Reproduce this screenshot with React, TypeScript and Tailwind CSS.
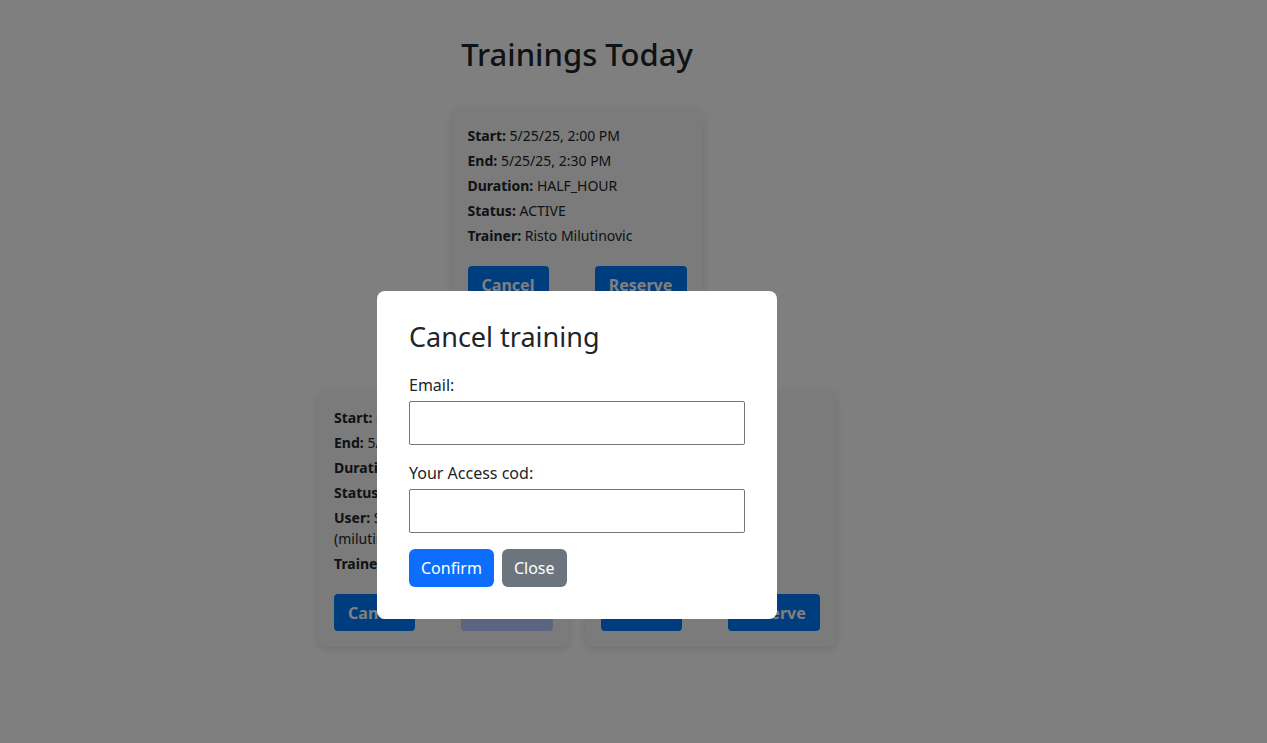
import React from "react";

const font = { fontFamily: '"Noto Sans", "Open Sans", sans-serif' };

function Line({ label, value }: { label: string; value: string }) {
  return (
    <p className="text-[14px] leading-[21px] text-[#212529] mb-1">
      <span className="font-bold">{label}</span> {value}
    </p>
  );
}

function Card({
  lines,
  reserveDisabled,
}: {
  lines: [string, string][];
  reserveDisabled?: boolean;
}) {
  return (
    <div className="w-[251px] rounded-lg bg-[#f7f7f7] shadow-[0_2px_8px_rgba(0,0,0,0.12)] px-4 pt-[17px] pb-4 flex flex-col">
      {lines.map(([l, v]) => (
        <Line key={l} label={l} value={v} />
      ))}
      <div className="mt-auto pt-4 flex justify-between">
        <button className="h-[37px] w-[81px] rounded bg-[#007bff] text-white font-bold text-[16px]">
          Cancel
        </button>
        <button
          className={
            reserveDisabled
              ? "h-[37px] w-[92px] rounded bg-[#b4caff] text-white font-bold text-[16px]"
              : "h-[37px] w-[92px] rounded bg-[#007bff] text-white font-bold text-[16px]"
          }
        >
          Reserve
        </button>
      </div>
    </div>
  );
}

export default function App() {
  return (
    <div style={font} className="relative w-full h-[743px] bg-white overflow-hidden">
      <div className="w-[1154px] flex flex-col items-center pt-[36px]">
        <h2 className="text-[31px] leading-[1.2] text-[#212529] font-medium">Trainings Today</h2>
        <div className="mt-[35px]">
          <Card
            lines={[
              ["Start:", "5/25/25, 2:00 PM"],
              ["End:", "5/25/25, 2:30 PM"],
              ["Duration:", "HALF_HOUR"],
              ["Status:", "ACTIVE"],
              ["Trainer:", "Risto Milutinovic"],
            ]}
          />
        </div>
        <div className="mt-[71px] flex gap-4 items-stretch">
          <Card
            reserveDisabled
            lines={[
              ["Start:", "5/25/25, 3:00 PM"],
              ["End:", "5/25/25, 3:30 PM"],
              ["Duration:", "HALF_HOUR"],
              ["Status:", "RESERVED"],
              ["User:", "Stefan Milutinovic (milutinovic@gmail.com)"],
              ["Trainer:", "Risto Milutinovic"],
            ]}
          />
          <Card
            lines={[
              ["Start:", "5/25/25, 4:00 PM"],
              ["End:", "5/25/25, 4:30 PM"],
              ["Duration:", "HALF_HOUR"],
              ["Status:", "ACTIVE"],
              ["Trainer:", "Risto Milutinovic"],
            ]}
          />
        </div>
      </div>

      <div className="fixed inset-0 bg-black/50">
        <div className="absolute left-[377px] top-[291px] w-[400px] bg-white rounded-lg p-8">
          <h3 className="-mt-[2px] mb-[20px] text-[27px] leading-[1.2] text-[#212529]">Cancel training</h3>
          <label className="block text-[16px] leading-[24px] text-[#212529] mb-1">Email:</label>
          <input className="block w-full h-[44px] border border-[#767676] rounded-[2px] bg-white" />
          <label className="block mt-4 text-[16px] leading-[24px] text-[#212529] mb-1">
            Your Access cod:
          </label>
          <input className="block w-full h-[44px] border border-[#767676] rounded-[2px] bg-white" />
          <div className="mt-4 flex gap-2">
            <button className="h-[38px] px-3 rounded-md bg-[#0d6efd] text-white text-[16px]">
              Confirm
            </button>
            <button className="h-[38px] px-3 rounded-md bg-[#6c757d] text-white text-[16px]">
              Close
            </button>
          </div>
        </div>
      </div>
    </div>
  );
}
